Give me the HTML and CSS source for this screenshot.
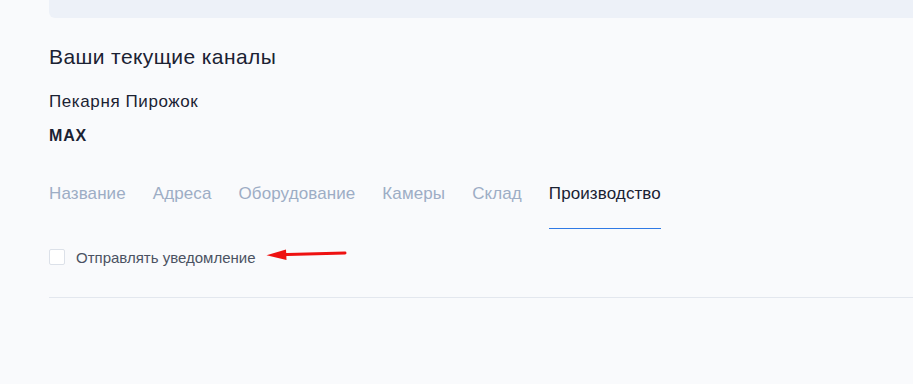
FILE: index.html
```html
<!DOCTYPE html>
<html lang="ru">
<head>
    <meta charset="UTF-8">
    <title>Каналы</title>
    <link rel="stylesheet" href="styles.css">
</head>
<body>
    <div class="page">
        <div class="topBox"></div>

        <h1 class="title">Ваши текущие каналы</h1>
        <p class="shop">Пекарня Пирожок</p>
        <p class="plan">MAX</p>

        <nav class="tabs">
            <a class="tab">Название</a>
            <a class="tab">Адреса</a>
            <a class="tab">Оборудование</a>
            <a class="tab">Камеры</a>
            <a class="tab">Склад</a>
            <a class="tab active">Производство</a>
        </nav>

        <div class="notify">
            <label class="check">
                <span class="box"></span>
                <span class="checkText">Отправлять уведомление</span>
            </label>
            <!-- красная стрелка-подсказка -->
            <svg class="arrow" width="82" height="12" viewBox="0 0 82 12">
                <path d="M12 6.8 L79 5" stroke="#ee1111" stroke-width="3" stroke-linecap="round" fill="none"/>
                <path d="M0.5 7.2 L20 1.6 L20.5 12 Z" fill="#ee1111"/>
            </svg>
        </div>

        <hr class="line">
    </div>
</body>
</html>
```

FILE: styles.css
```css
:root{
    --bg: #f9fafc;
    --topBox: #edf1f8;
    --dark: #1b2233;
    --muted: #9dadc5;
    --blue: #2f7ae5;
    --lineColor: #e3e7ee;
}

body{
    margin: 0;
    background-color: var(--bg);
    font-family: "Liberation Sans", Arial, sans-serif;
    color: var(--dark);
}

.page{
    padding-left: 49px;
}

/* верхний блок */
.topBox{
    height: 18px;
    background-color: var(--topBox);
    border-bottom-left-radius: 6px;
}

.title{
    margin: 27px 0 0 0;
    font-size: 21px;
    font-weight: normal;
    letter-spacing: 0.4px;
    line-height: 24px;
}
.shop{
    margin: 23px 0 0 0;
    font-size: 17px;
    letter-spacing: 0.6px;
    line-height: 20px;
}
.plan{
    margin: 14px 0 0 0;
    font-size: 16px;
    font-weight: bold;
    letter-spacing: 0.8px;
    line-height: 20px;
}

/*------------вкладки--------------*/
.tabs{
    display: flex;
    gap: 27px;
    margin-top: 38px;
}
.tab{
    font-size: 17px;
    letter-spacing: 0.1px;
    line-height: 20px;
    color: var(--muted);
    padding-bottom: 24px;
    cursor: pointer;
}
.tab.active{
    color: var(--dark);
    border-bottom: 1px solid var(--blue);
}

/*------------чекбокс--------------*/
.notify{
    display: flex;
    align-items: center;
    margin-top: 20px;
    height: 16px;
}
.check{
    display: flex;
    align-items: center;
    cursor: pointer;
}
.box{
    width: 14px;
    height: 14px;
    border: 1px solid #dce1e9;
    border-radius: 2px;
    background-color: #fff;
    margin-right: 11px;
}
.checkText{
    font-size: 15px;
    color: #4b5262;
}
.arrow{
    margin-left: 10px;
    margin-top: -7px;
}

.line{
    margin: 32px 0 0 0;
    border: none;
    border-top: 1px solid var(--lineColor);
}
```
